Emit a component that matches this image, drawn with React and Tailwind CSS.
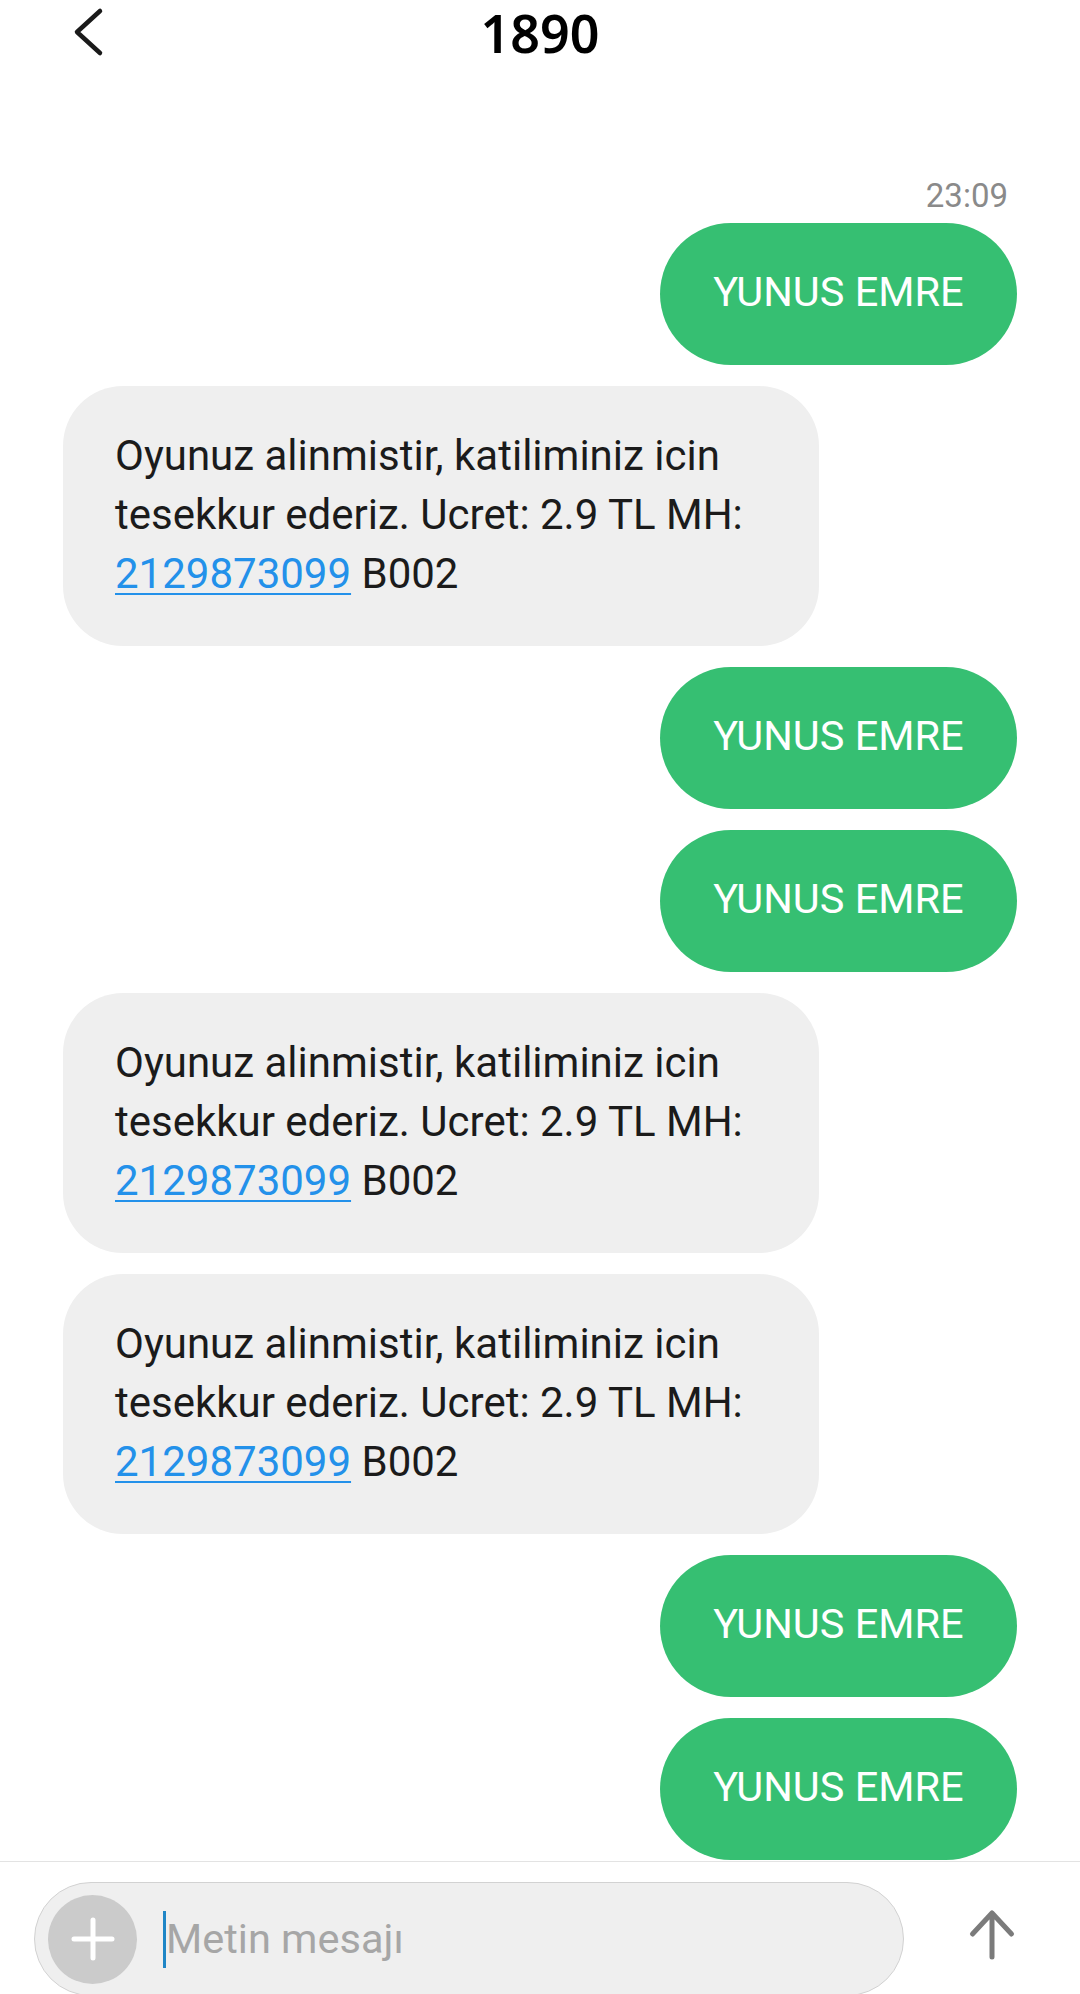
import React from 'react'

const SENT = 'YUNUS EMRE'

const thread = [
  { id: 1, out: true },
  { id: 2, out: false },
  { id: 3, out: true },
  { id: 4, out: true },
  { id: 5, out: false },
  { id: 6, out: false },
  { id: 7, out: true },
  { id: 8, out: true },
]

function SentBubble() {
  return (
    <div className="self-end w-[357px] h-[142px] shrink-0 rounded-full bg-[#36bf72] flex items-center justify-center pb-[5px]">
      <span className="text-white text-[41.5px] leading-none whitespace-nowrap">{SENT}</span>
    </div>
  )
}

function ReceivedBubble() {
  return (
    <div className="self-start w-[756px] h-[260px] shrink-0 rounded-[60px] bg-[#efefef] pl-[52px] pt-[40px] text-[42px] leading-[59px] text-[#1b1b1b] whitespace-nowrap">
      Oyunuz alinmistir, katiliminiz icin
      <br />
      tesekkur ederiz. Ucret: 2.9 TL MH:
      <br />
      <span className="text-[#2391ea] underline decoration-[2px] underline-offset-[5px]">2129873099</span> B002
    </div>
  )
}

export default function App() {
  return (
    <div className="w-[1080px] h-[1994px] overflow-hidden bg-white flex flex-col font-['Roboto','Liberation_Sans',sans-serif]">

      {/* Header */}
      <div className="h-[64px] shrink-0 grid grid-cols-[1fr_auto_1fr] items-start">
        <div className="pl-[60px]">
          <svg width="50" height="64" viewBox="0 0 50 64" fill="none">
            <polyline points="40,11 17,32 40,53" stroke="#1a1a1a" strokeWidth="4.5" strokeLinecap="round" strokeLinejoin="round" />
          </svg>
        </div>
        <h1 className="pt-[3px] text-[52px] leading-[60px] font-semibold text-black font-['Noto_Sans','Open_Sans',sans-serif]">1890</h1>
        <div />
      </div>

      {/* Messages */}
      <div className="flex-1 overflow-hidden px-[63px] pt-[115px] flex flex-col">
        <div className="self-end mr-[9px] text-[33px] leading-none text-[#8a8a8a] mb-[11px]">23:09</div>
        <div className="flex flex-col gap-[21px]">
          {thread.map(m => (m.out ? <SentBubble key={m.id} /> : <ReceivedBubble key={m.id} />))}
        </div>
      </div>

      {/* Composer */}
      <div className="h-[133px] shrink-0 border-t border-[#e3e3e3] pt-[20px] pl-[34px] flex items-start">
        <div className="w-[870px] h-[114px] shrink-0 rounded-full bg-[#efefef] border-[1.5px] border-[#d2d2d2] pl-[13px] flex items-center">
          <div className="w-[89px] h-[89px] rounded-full bg-[#cbcbcb] flex items-center justify-center shrink-0">
            <svg width="44" height="44" viewBox="0 0 44 44" fill="none">
              <path d="M22 3v38M3 22h38" stroke="#fff" strokeWidth="5" strokeLinecap="round" />
            </svg>
          </div>
          <div className="ml-[26px] w-[3px] h-[57px] bg-[#1f86c6] shrink-0" />
          <span className="text-[41.5px] leading-none text-[#a6a6a6]">Metin mesajı</span>
        </div>
        <div className="flex-1 h-[114px] flex items-center justify-center pb-[8px]">
          <svg width="50" height="52" viewBox="0 0 50 52" fill="none">
            <path d="M25 4v44M5.5 25L25 4l19.5 21" stroke="#7b7b7b" strokeWidth="5" strokeLinecap="round" strokeLinejoin="round" />
          </svg>
        </div>
      </div>

    </div>
  )
}
